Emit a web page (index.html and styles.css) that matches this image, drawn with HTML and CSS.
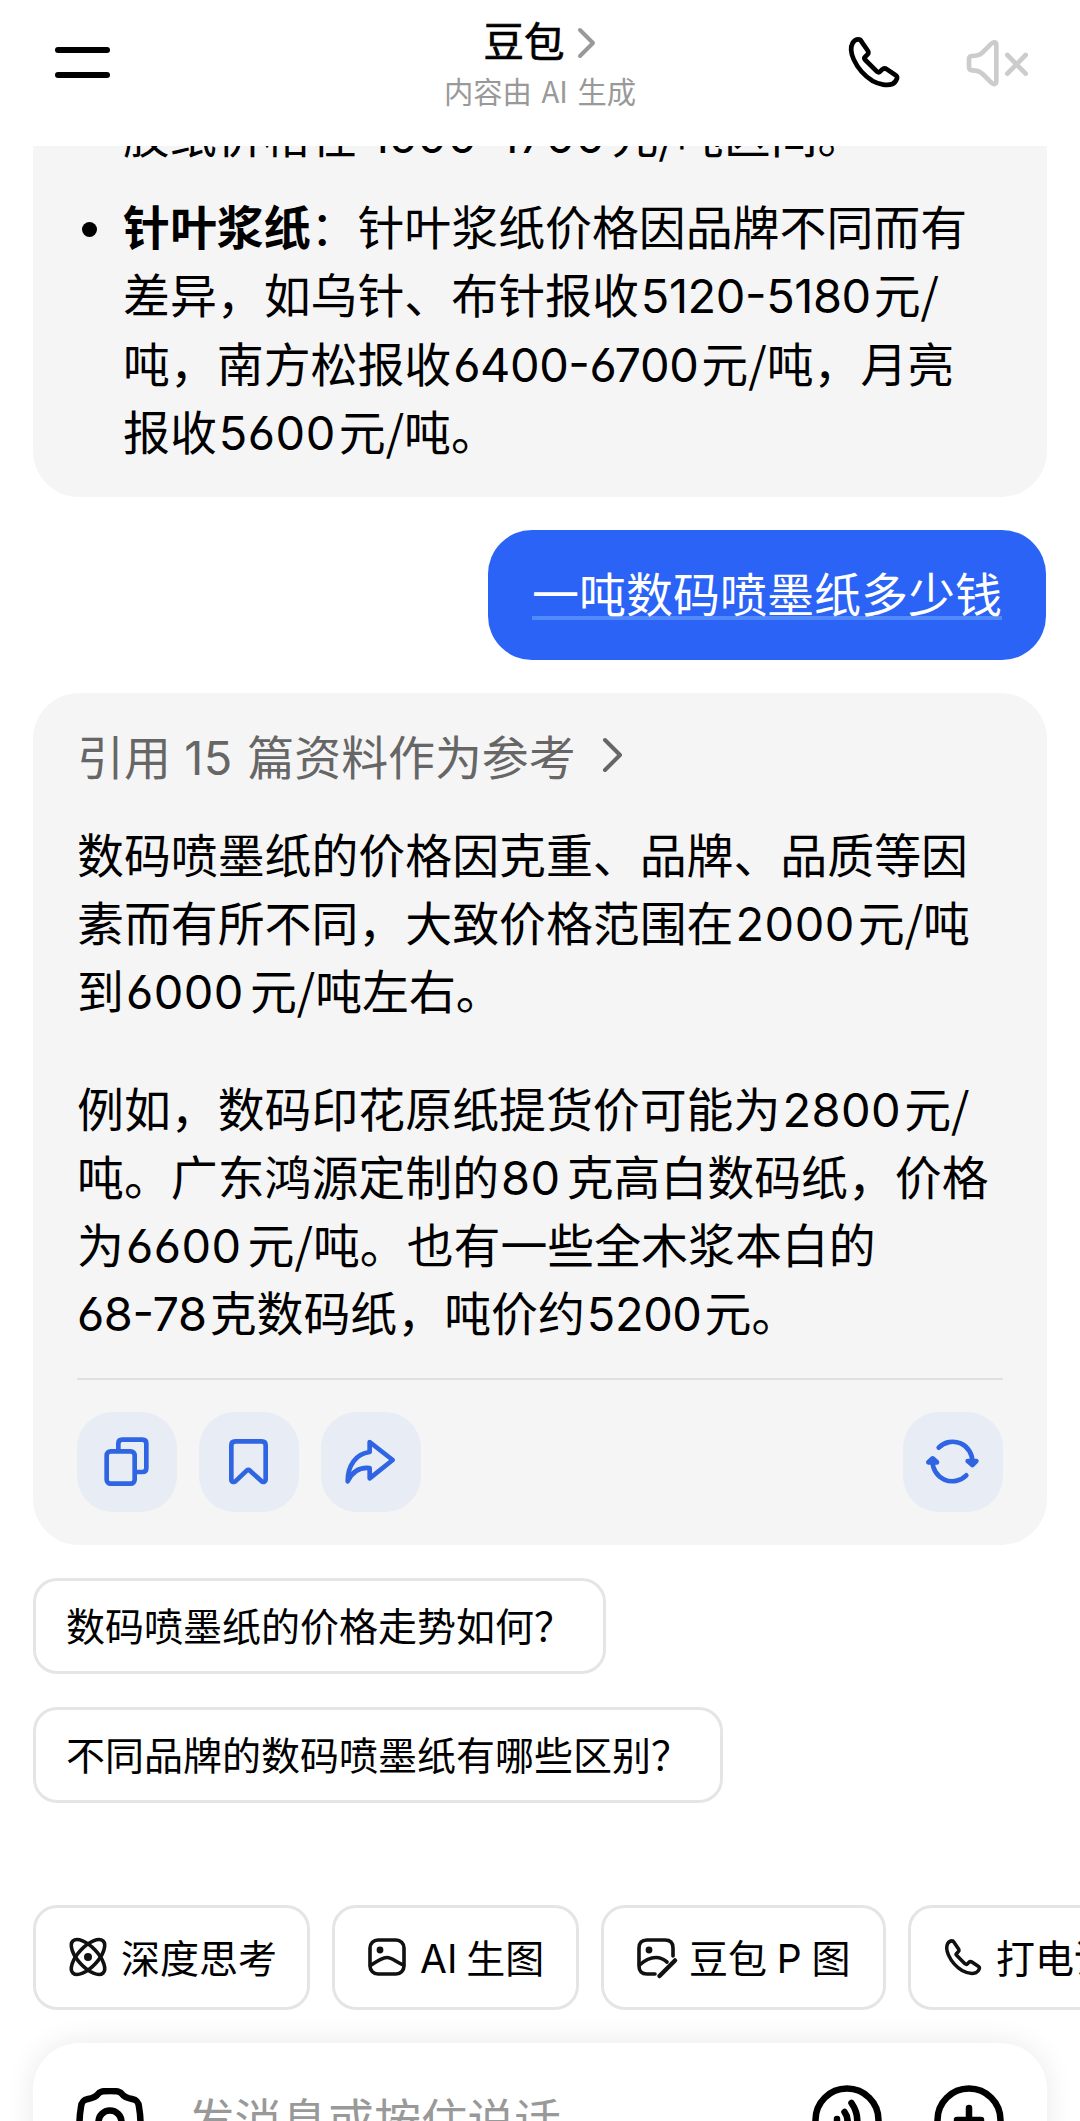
FILE: index.html
```html
<!DOCTYPE html>
<html lang="zh-CN">
<head>
  <meta charset="UTF-8" />
  <meta name="viewport" content="width=device-width, initial-scale=1.0"/>
  <title>豆包</title>
  <link rel="stylesheet" href="styles.css">
</head>
<body>

  <!-- Header -->
  <header>
    <button class="menu-btn"><span></span><span></span></button>
    <div class="title">
      <h1>豆包
        <svg width="20" height="32" viewBox="0 0 20 32"><path d="M3 3 L16 16 L3 29"/></svg>
      </h1>
      <p>内容由 AI 生成</p>
    </div>
    <div class="header-icons">
      <svg class="phone" width="56" height="56" viewBox="80 72 168 168"><path d="M117 88C110 88 104 92 100 99C92 113 95 130 103 148C113 170 135 197 160 213C180 224 205 228 219 222C226 219 230 213 233 205C234 200 232 197 228 195L203 178C197 174 192 175 188 179L182 185C179 188 176 187 173 185L138 150C135 147 134 144 137 141L144 134C148 130 148 127 146 123L126 94C124 90 121 88 117 88Z"/></svg>
      <svg class="mute" width="64" height="56" viewBox="442 74 192 168"><path d="M460 137C472 137 482 136 492 126L518 100C525 94 533 94 533 104L533 213C533 222 525 224 518 217L492 191C484 183 473 180 461 180C454 180 451 176 451 170V147C451 141 454 137 460 137ZM566 134L621 190M621 134L566 190"/></svg>
    </div>
  </header>

  <!-- Chat -->
  <main>
    <div class="card card-cut">
      <ul>
        <li class="no-dot">胶纸价格在 <span class="num wide">1600-1700</span>元/吨区间。</li>
        <li><b>针叶浆纸</b>：针叶浆纸价格因品牌不同而有<br>差异，如乌针、布针报收<span class="num range">5120-5180</span>元/<br>吨，南方松报收<span class="num range">6400-6700</span>元/吨，月亮<br>报收<span class="num">5600</span>元/吨。</li>
      </ul>
    </div>

    <div class="bubble"><span>一吨数码喷墨纸多少钱</span></div>

    <div class="card">
      <div class="refs">
        <span>引用 <span class="num">15</span> 篇资料作为参考</span>
        <svg width="24" height="36" viewBox="0 0 24 36"><path d="M4 3 L19 18 L4 33"/></svg>
      </div>
      <p>数码喷墨纸的价格因克重、品牌、品质等因<br>素而有所不同，大致价格范围在<span class="num">2000</span>元/吨<br>到<span class="num wide">6000</span>元/吨左右。</p>
      <p>例如，数码印花原纸提货价可能为<span class="num">2800</span>元/<br>吨。广东鸿源定制的<span class="num wide">80</span>克高白数码纸，价格<br>为<span class="num wide">6600</span>元/吨。也有一些全木浆本白的<br><span class="num range start">68-78</span>克数码纸，吨价约<span class="num range">5200</span>元。</p>
      <hr>
      <div class="actions">
        <button><svg viewBox="0 0 300 300"><rect x="89" y="118" width="84" height="97" rx="12"/><path d="M124 113V95q0-12 12-12H196q12 0 12 12V168q0 12-12 12H180"/></svg></button>
        <button><svg viewBox="0 0 300 300"><path d="M97 100q0-12 12-12H188q12 0 12 12V203C200 209 193 212 188 208L153 176Q148 172 143 176L109 208C104 212 97 209 97 203Z"/></svg></button>
        <button><svg viewBox="0 0 300 300"><path d="M146 90L215 144L146 199V168C115 165 93 180 80 208C80 160 105 125 146 120Z"/></svg></button>
        <button class="refresh"><svg viewBox="0 0 300 300"><path d="M107 107A59 59 0 0 1 208 152M190 190A59 59 0 0 1 89 145"/><path class="head" d="M194 147L208 159L220 147ZM76 151L89 139L102 151Z"/></svg></button>
      </div>
    </div>

    <div class="suggest">数码喷墨纸的价格走势如何？</div>
    <div class="suggest">不同品牌的数码喷墨纸有哪些区别？</div>
  </main>

  <!-- Tools -->
  <div class="tools">
    <div class="tool think">
      <svg viewBox="0 0 38 38"><ellipse cx="19" cy="19" rx="22" ry="10" transform="rotate(47 19 19)"/><ellipse cx="19" cy="19" rx="22" ry="10" transform="rotate(-47 19 19)"/><circle class="dot" cx="19" cy="19" r="4"/></svg>
      深度思考
    </div>
    <div class="tool image">
      <svg viewBox="0 0 38 38"><rect x="2" y="2" width="34" height="34" rx="8"/><circle class="dot" cx="12" cy="12" r="3.4"/><path d="M2.5 27.5C9 23 14 19.5 19 19.5C24 19.5 28 24 35.5 27"/></svg>
      <span><i>AI</i> 生图</span>
    </div>
    <div class="tool edit">
      <svg viewBox="0 0 38 38"><path d="M18 36H10Q2 36 2 28V10Q2 2 10 2H28Q36 2 36 10V18"/><circle class="dot" cx="12" cy="12" r="3.4"/><path d="M2.5 27C8 22 14 19.5 19 19.5C23 19.5 27 21.5 30 24"/><path class="pen" d="M22.5 38L38 22.5"/></svg>
      <span>豆包 <i>P</i> 图</span>
    </div>
    <div class="tool call">
      <svg class="small-phone" viewBox="84 76 160 160"><path d="M117 88C110 88 104 92 100 99C92 113 95 130 103 148C113 170 135 197 160 213C180 224 205 228 219 222C226 219 230 213 233 205C234 200 232 197 228 195L203 178C197 174 192 175 188 179L182 185C179 188 176 187 173 185L138 150C135 147 134 144 137 141L144 134C148 130 148 127 146 123L126 94C124 90 121 88 117 88Z"/></svg>
      打电话
    </div>
  </div>

  <!-- Input -->
  <div class="input-bar">
    <svg class="camera" width="68" height="62" viewBox="0 0 68 62"><path d="M12 11C17 10 20 9 22 6C23.5 3.5 26 3 34 3C42 3 44.5 3.5 46 6C48 9 51 10 56 11C61 12 62.5 14 63 19C65 30 65 40 63 50C62 56 59 58.5 54 58.5H14C9 58.5 6 56 5 50C3 40 3 30 5 19C5.5 14 7 12 12 11Z"/><circle cx="34" cy="34" r="11.5"/></svg>
    <div class="placeholder">发消息或按住说话</div>
    <svg class="voice" width="70" height="70" viewBox="0 0 70 70"><circle cx="35" cy="35" r="31.5"/><path d="M39.5 18Q51 35 39.5 52M32.500 27Q38.5 35 32.5 43M25 34V36"/></svg>
    <svg class="plus" width="70" height="70" viewBox="0 0 70 70"><circle cx="35" cy="35" r="31.5"/><path d="M35 23V47M23 35H47"/></svg>
  </div>

</body>
</html>
```
FILE: styles.css
```css
* { box-sizing: border-box; }
body {
  margin: 0; height: 2121px; overflow: hidden; background: #fff; color: #000;
  font-family: "Noto Sans CJK SC", sans-serif;
  display: flex; flex-direction: column;
}
button { border: none; background: none; padding: 0; margin: 0; }
svg { display: block; flex: none; fill: none; stroke: currentColor; stroke-linecap: round; stroke-linejoin: round; }
h1, p, ul { margin: 0; padding: 0; font-weight: 400; }

/* header */
header {
  height: 146px; flex: none; padding: 0 50px 0 55px;
  display: grid; grid-template-columns: 233px 1fr 238px;
}
.menu-btn { display: flex; flex-direction: column; gap: 19px; width: 55px; height: 31px; margin-top: 47px; }
.menu-btn span { height: 6px; border-radius: 3px; background: #000; }
.title { padding-top: 15px; text-align: center; }
h1 {
  display: flex; justify-content: center; align-items: center; gap: 12px;
  font-size: 40.5px; line-height: 50px; -webkit-text-stroke: 0.7px #000;
}
h1 svg { stroke: #999; stroke-width: 4; margin-top: 5px; }
.title p { font-size: 29.3px; line-height: 40px; color: #999; margin-top: 5px; word-spacing: 3px; }
.header-icons { display: flex; justify-content: flex-end; gap: 64px; padding-top: 34px; }
.phone, .mute { stroke-width: 14; }
.mute { color: #ccc; margin-top: 1px; }

/* chat */
main { flex: none; padding: 0 33px; }
.card {
  border-radius: 46px; background: #f5f5f5; padding: 28px 44px 33px;
  font-size: 46.9px; line-height: 68.2px; white-space: nowrap;
}
.card-cut { border-radius: 0 0 46px 46px; overflow: hidden; height: 351px; padding: 0 44px 0 90px; }
.card-cut ul { margin-top: -47px; list-style: none; }
.card-cut li { position: relative; margin-bottom: 24px; }
.card-cut li::before {
  content: ""; position: absolute; left: -41px; top: 31px;
  width: 15px; height: 15px; border-radius: 50%; background: #000;
}
.card-cut li.no-dot::before { display: none; }
.num {
  font-family: Inter, sans-serif; line-height: 1; letter-spacing: 0.5px; margin: 0 3px 0 2px;
  font-feature-settings: "case", "cv03";
}
.num.range { letter-spacing: -0.4px; }
.num.wide { margin-right: 6px; }
.num.start { margin-left: 0; }
.bubble {
  width: 558px; height: 130px; margin: 33px 1px 33px auto; border-radius: 44px;
  background: #2a63f6; color: #fff;
  display: flex; justify-content: center; align-items: center;
}
.bubble span { font-size: 47px; line-height: 41px; height: 49px; border-bottom: 4px solid #5289fb; }
.refs { display: flex; align-items: center; gap: 25px; height: 68px; color: #666; margin-bottom: 30px; word-spacing: 1px; }
.refs svg { stroke-width: 4; }
.card p + p { margin-top: 49px; }
hr { border: none; height: 2px; background: #e0e0e0; margin: 33px 0 32px; }
.actions { display: flex; gap: 22px; }
.actions button { width: 100px; height: 100px; border-radius: 36px; background: #e7ecf5; color: #2f64e2; }
.actions svg { width: 100px; height: 100px; stroke-width: 14; }
.actions .refresh { margin-left: auto; }
.head { fill: currentColor; }
.suggest {
  width: fit-content; height: 96px; margin: 33px 0; padding: 0 30px;
  border: 3px solid #e5e5e5; border-radius: 24px;
  font-size: 39px; line-height: 87px; white-space: nowrap;
}

/* tools */
.tools { display: flex; flex: none; gap: 22px; padding: 0 0 0 33px; margin-top: 69px; overflow: hidden; }
.tool {
  display: flex; align-items: center; flex: none; gap: 14px; height: 105px; padding: 0 0 3px 33px;
  border: 3px solid #e5e5e5; border-radius: 24px; font-size: 39px; white-space: nowrap;
}
.tool svg { width: 38px; height: 38px; stroke-width: 3.6; color: #111; margin-top: 2px; overflow: visible; }
.tool .small-phone { stroke-width: 15; }
.tool i { font-family: Inter, sans-serif; font-style: normal; }
.tool.edit span { word-spacing: 1px; }
.pen { stroke-width: 4.5; }
.dot { fill: currentColor; stroke: none; }
.think { width: 277px; }
.image { width: 247px; }
.edit { width: 285px; }
.call { width: 240px; }

/* input */
.input-bar {
  display: flex; align-items: flex-start; flex: none; height: 150px; margin: 33px 33px 0;
  padding: 42px 43px 0 43px; border-radius: 46px; background: #fff;
  box-shadow: 0 0 30px rgba(0, 0, 0, 0.09);
}
.input-bar svg { stroke-width: 6.5; }
.camera { margin-top: 3px; }
.placeholder { flex: 1; padding-left: 44px; color: #999; font-size: 46.6px; line-height: 66px; }
.plus { margin-left: 52px; }
```
